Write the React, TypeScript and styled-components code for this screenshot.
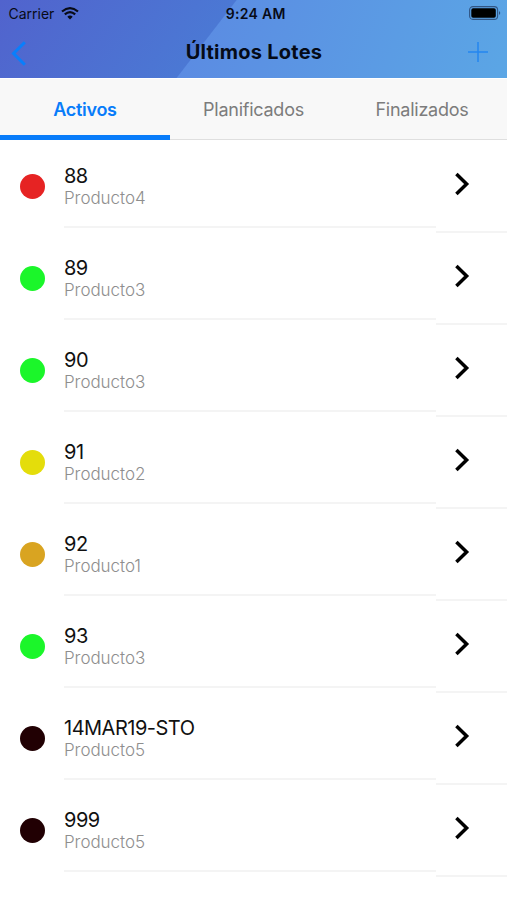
import React from "react";
import styled, { createGlobalStyle } from "styled-components";

const GlobalStyle = createGlobalStyle`
  * { box-sizing: border-box; }
  body { margin: 0; background: #fff; font-family: Inter, "Liberation Sans", sans-serif; }
  button { font-family: inherit; border: 0; padding: 0; background: none; }
`;

const Screen = styled.main`
  width: 507px;
  height: 900px;
  overflow: hidden;
  background: #fff;
`;

const Header = styled.header`
  height: 78px;
  background:
    linear-gradient(127.6deg, #5163cd 0, #4b78d4 187px, transparent 188px),
    linear-gradient(110deg, #5b88e2 30%, #5ba6e5 100%);
`;

const StatusBar = styled.div`
  height: 27px;
  display: grid;
  grid-template-columns: 1fr auto 1fr;
  align-items: center;
  padding: 0 6px 0 8.5px;
  color: #080b16;
`;

const Carrier = styled.div`
  display: flex;
  align-items: center;
  gap: 7px;
  font-size: 14px;
  line-height: 27px;
`;

const Clock = styled.time`
  padding-left: 2px;
  font-size: 14px;
  font-weight: 600;
  line-height: 27px;
  letter-spacing: 0.3px;
`;

const Battery = styled.svg`
  justify-self: end;
  margin-bottom: 1px;
`;

const NavBar = styled.div`
  height: 50px;
  display: grid;
  grid-template-columns: 40px 1fr 40px;
  align-items: center;
  padding: 0 19px;
`;

const NavButton = styled.button<{ $end?: boolean }>`
  display: flex;
  justify-self: ${(p) => (p.$end ? "end" : "start")};
  margin-left: ${(p) => (p.$end ? 0 : -9)}px;
  margin-top: ${(p) => (p.$end ? 0 : 2)}px;
`;

const Title = styled.h1`
  margin: 0;
  padding-left: 1px;
  text-align: center;
  font-size: 20px;
  line-height: 24px;
  font-weight: 700;
  letter-spacing: 0.25px;
  color: #050b17;
`;

const Tabs = styled.nav`
  display: grid;
  grid-template-columns: 170px 167px 170px;
  height: 62px;
  border-top: 1px solid #fff;
  background: #f8f8f8;
`;

const Tab = styled.button<{ $active?: boolean }>`
  padding-top: ${(p) => (p.$active ? 5 : 1)}px;
  border-bottom: ${(p) => (p.$active ? "5px solid #087cfa" : "1px solid #dfdfdf")};
  color: ${(p) => (p.$active ? "#087cfa" : "#7c7c7c")};
  font-size: 18px;
  font-weight: ${(p) => (p.$active ? 600 : 400)};
  letter-spacing: ${(p) => (p.$active ? -0.3 : -0.25)}px;
`;

const Row = styled.li`
  display: grid;
  grid-template-columns: 64px 372px 71px;
  height: 92px;
`;

const Dot = styled.span<{ $color: string }>`
  width: 25px;
  height: 25px;
  margin: 33.5px 0 0 20.3px;
  border-radius: 50%;
  background: ${(p) => p.$color};
`;

const List = styled.ul`
  list-style: none;
  margin: 0;
  padding: 0;
`;

const Details = styled.div`
  height: 88px;
  padding-top: 24px;
  border-bottom: 2px solid #f4f4f4;
`;

const Lot = styled.div`
  font-size: 20px;
  line-height: 24px;
  letter-spacing: -0.5px;
  color: #111;
`;

const Product = styled.div`
  font-size: 17px;
  line-height: 20px;
  font-weight: 300;
  letter-spacing: -0.05px;
  color: #8e8e8e;
`;

const OpenButton = styled.button`
  display: flex;
  height: 93px;
  padding: 32px 0 0 18px;
  border-bottom: 2px solid #f4f4f4;
`;

const lots = [
  { id: "88", product: "Producto4", color: "#e62323" },
  { id: "89", product: "Producto3", color: "#1bf62a" },
  { id: "90", product: "Producto3", color: "#1bf62a" },
  { id: "91", product: "Producto2", color: "#e4dd0b" },
  { id: "92", product: "Producto1", color: "#d9a421" },
  { id: "93", product: "Producto3", color: "#1bf62a" },
  { id: "14MAR19-STO", product: "Producto5", color: "#210003" },
  { id: "999", product: "Producto5", color: "#210003" },
];

export default function App() {
  return (
    <Screen>
      <GlobalStyle />
      <Header>
        <StatusBar>
          <Carrier>
            Carrier
            <svg width="18" height="13" viewBox="0 0 18 13" fill="none" stroke="#080b16" strokeWidth="2.2">
              <path d="M1 4.5Q9-2.2 17 4.5M3.8 7.4Q9 2.9 14.2 7.4" />
              <path d="M6.3 9.7Q9 7.3 11.7 9.7L9 12.4Z" fill="#080b16" stroke="none" />
            </svg>
          </Carrier>
          <Clock>9:24 AM</Clock>
          <Battery width="32" height="14" viewBox="0 0 32 14">
            <rect x=".6" y=".6" width="28" height="12.8" rx="3.4" fill="none" stroke="#315584" strokeWidth="1.1" />
            <rect x="2.3" y="2.2" width="24.5" height="9.6" rx="1.8" fill="#000" />
            <path d="M30 5Q32.5 7 30 9Z" fill="#315584" />
          </Battery>
        </StatusBar>
        <NavBar>
          <NavButton aria-label="Volver">
            <svg width="18" height="27" viewBox="0 0 18 27" fill="none" stroke="#087ffc" strokeWidth="3">
              <path d="M14.8 2.2L3.5 13.5 14.8 24.8" />
            </svg>
          </NavButton>
          <Title>Últimos Lotes</Title>
          <NavButton $end aria-label="Añadir">
            <svg width="20" height="20" viewBox="0 0 20 20" stroke="#2586ef" strokeWidth="1.5">
              <path d="M10 0V20M0 10H20" />
            </svg>
          </NavButton>
        </NavBar>
      </Header>
      <Tabs>
        <Tab $active>Activos</Tab>
        <Tab>Planificados</Tab>
        <Tab>Finalizados</Tab>
      </Tabs>
      <List>
        {lots.map((lot) => (
          <Row key={lot.id}>
            <Dot $color={lot.color} />
            <Details>
              <Lot>{lot.id}</Lot>
              <Product>{lot.product}</Product>
            </Details>
            <OpenButton aria-label={`Abrir ${lot.id}`}>
              <svg width="16" height="24" viewBox="0 0 16 24" fill="none" stroke="#000" strokeWidth="3.5">
                <path d="M2.4 2L12.6 12 2.4 22" />
              </svg>
            </OpenButton>
          </Row>
        ))}
      </List>
    </Screen>
  );
}
